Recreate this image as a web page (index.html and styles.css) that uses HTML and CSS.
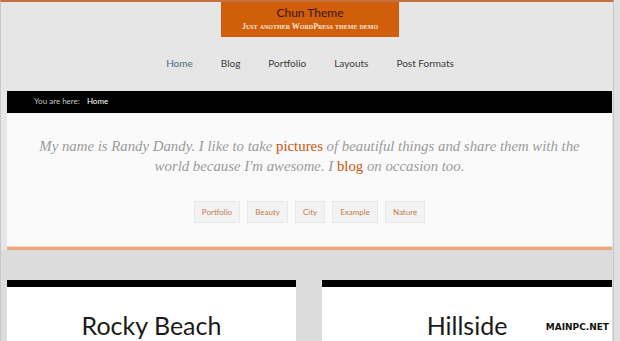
FILE: index.html
```html
<!DOCTYPE html>
<html lang="en">
<head>
	<meta charset="UTF-8">
	<title>Chun Theme</title>
	<link rel="stylesheet" href="styles.css">
</head>
<body>
	<div class="frame">
		<header class="site-header">
			<div class="branding">
				<h1>Chun Theme</h1>
				<p>Just another WordPress theme demo</p>
			</div>
			<nav class="menu">
				<a href="#" class="current">Home</a>
				<a href="#">Blog</a>
				<a href="#">Portfolio</a>
				<a href="#">Layouts</a>
				<a href="#">Post Formats</a>
			</nav>
		</header>
		<div class="crumbs">
			<span class="label">You are here:</span>
			<span class="here">Home</span>
		</div>
		<section class="intro">
			<p class="bio">My name is Randy Dandy. I like to take <a href="#">pictures</a> of beautiful things and share them with the world because I'm awesome. I <a href="#">blog</a> on occasion too.</p>
			<ul class="tags">
				<li>Portfolio</li>
				<li>Beauty</li>
				<li>City</li>
				<li>Example</li>
				<li>Nature</li>
			</ul>
		</section>
		<section class="cards">
			<article class="card"><h2>Rocky Beach</h2></article>
			<article class="card"><h2>Hillside</h2></article>
		</section>
		<div class="stamp">MAINPC.NET</div>
	</div>
</body>
</html>
```

FILE: styles.css
```css
* {
	margin: 0;
	padding: 0;
	box-sizing: border-box;
}
html, body {
	height: 100%;
	overflow: hidden;
}
body {
	background-color: #e0e0e0;
	font-family: "Lato", "Noto Sans", sans-serif;
}
.frame {
	position: relative;
	height: 100%;
	border-top: 2px solid #c4703f;
	border-left: 1px solid #c8c8c8;
	border-right: 1px solid #c8c8c8;
	margin: 0 6px 0 0;
	padding: 0 0 0 6px;
	background: linear-gradient(#e6e6e6 0, #e6e6e6 248px, #dcdcdc 248px);
}
.site-header {
	text-align: center;
}
.branding {
	width: 178px;
	height: 35px;
	margin: 0 auto;
	background-color: #d05e0b;
	padding-top: 3px;
}
.branding h1 {
	font-family: "Lato", sans-serif;
	font-weight: normal;
	font-size: 12px;
	line-height: 16px;
	color: #3b1500;
}
.branding p {
	font-family: "Liberation Serif", serif;
	font-variant: small-caps;
	font-weight: bold;
	font-size: 8px;
	line-height: 12px;
	color: #fbe7d8;
}
.menu {
	display: flex;
	justify-content: center;
	gap: 28px;
	padding: 20px 0 0 0;
	height: 54px;
}
.menu a {
	font-size: 10px;
	color: #3c3c3c;
	text-decoration: none;
}
.menu a.current {
	color: #3f6f7c;
}
.crumbs {
	background-color: #000;
	height: 22px;
	padding: 5px 0 0 27px;
	font-size: 8px;
	margin-right: 1px;
}
.crumbs .label {
	color: #c8c8c8;
	margin-right: 5px;
}
.crumbs .here {
	color: #ffffff;
}
.intro {
	background-color: #fafafa;
	height: 137px;
	margin-right: 1px;
	padding: 23px 26px 0;
	text-align: center;
	border-bottom: 3px solid #eaa77b;
	box-shadow: inset 0 -1px 0 #f7d8c2;
}
.bio {
	font-family: "Liberation Serif", serif;
	font-style: italic;
	font-size: 14.8px;
	line-height: 20px;
	color: #9a9a9a;
}
.bio a {
	font-style: normal;
	color: #c8560e;
	text-decoration: none;
}
.tags {
	list-style: none;
	display: flex;
	justify-content: center;
	gap: 7px;
	margin-top: 25px;
}
.tags li {
	font-size: 8px;
	color: #c57a4a;
	background-color: #f3f3f3;
	border: 1px solid #e8e8e8;
	padding: 5px 7px;
}
.cards {
	display: grid;
	grid-template-columns: 289px 290px;
	gap: 26px;
	padding-top: 30px;
	margin-right: 1px;
}
.card {
	background-color: #fff;
	border-top: 7px solid #000;
	height: 62px;
	text-align: center;
	padding-top: 23px;
}
.card h2 {
	font-weight: normal;
	font-size: 25px;
	line-height: 30px;
	color: #1a1a1a;
}
.stamp {
	position: absolute;
	right: 4px;
	bottom: 9px;
	font-family: "DejaVu Sans", sans-serif;
	font-weight: bold;
	font-size: 9px;
	color: #111;
}
```
